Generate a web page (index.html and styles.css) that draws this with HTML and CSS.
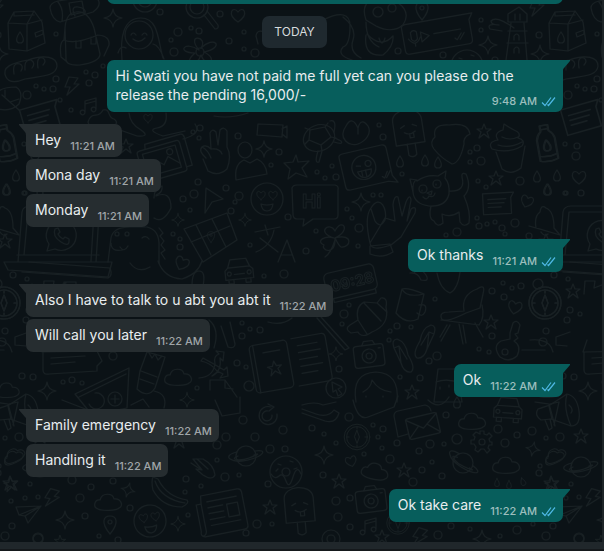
FILE: index.html
```html
<!DOCTYPE html>
<html lang="en">
<head>
<meta charset="utf-8">
<meta name="viewport" content="width=device-width, initial-scale=1">
<title>Chat</title>
<link rel="stylesheet" href="styles.css">
</head>
<body>
<svg class="sprite" aria-hidden="true">
  <defs>
    <g id="ticks"><path d="M1 6.5 4 9.5 10 1.5M6.5 8.5 7.5 9.5 14 1.5"/></g>
    <path id="spark" d="M0-9Q1-1 9 0Q1 1 0 9Q-1 1-9 0Q-1-1 0-9Z"/>
    <path id="star" d="M0-7 2-2 7-2 3 1 5 7 0 3-5 7-3 1-7-2-2-2Z"/>
    <path id="heart" d="M0 7C-12-1-5-10 0-3C5-10 12-1 0 7Z"/>
    <path id="drop" d="M0-6C5 1 4 5 0 5S-5 1 0-6Z"/>
    <path id="cloud" d="M-10 7C-16 5-13-3-8-2C-6-10 5-9 6-3C13-4 16 4 11 6C8 9-6 9-10 7Z"/>
    <path id="bolt" d="M-3-9 6-8 2-2 7-2-5 9-2 1-7 1Z"/>
    <path id="note" d="M-5 5V-6L6-9V2M-5-3 6-6M-5 5C-6 1-12 4-9 7C-7 9-5 7-5 5M6 2C5-2-1 1 2 4C4 6 6 4 6 2"/>
    <path id="pin" d="M0 9C-10-3-6-9 0-9S10-3 0 9ZM-2-3a2 2 0 1 0 4 0a2 2 0 1 0-4 0"/>
    <g id="compass"><circle r="13"/><circle r="16"/><path d="M0-8 3 0 0 8-3 0ZM0-12v2M0 10v2M-12 0h2M10 0h2"/></g>
    <g id="saturn"><circle r="10"/><path d="M-9-4C-26 0-14 8 2 4S22-7 9-5M-8 0C-18 4-5 5 3 2S15-3 8-1"/></g>
    <g id="camera"><rect x="-15" y="-10" width="30" height="22" rx="3"/><circle cy="1" r="7"/><circle cy="1" r="3"/><path d="M-6-10-4-14H5L7-10M10-6h2"/></g>
    <g id="love"><circle r="16"/><use href="#heart" transform="translate(-6-4) scale(.65)"/><use href="#heart" transform="translate(6-4) scale(.65)"/><path d="M-6 5Q0 7 6 5Q5 12 0 12T-6 5Z"/></g>
    <g id="card"><path d="M-15-10H16L13-5V11H-15ZM-10-4H8M-10 0H6M-10 4H3"/></g>
    <g id="bottle"><path d="M-4-18H4V-12Q8-9 9-4V17Q0 20-9 17V-4Q-8-9-4-12ZM-4-14H4M-9 12Q0 15 9 12"/><use href="#drop" y="3"/></g>
    <g id="popsicle"><path d="M-15 14V-10C-15-24 13-24 14-10V14ZM-4 14V25Q0 29 4 25V14M-8-3 -4-5M4-5 8-3M-5 2Q0 6 6 2M0 4V8H4V3"/></g>
    <g id="car"><path d="M-14 8V-1L-11-4-8-12H8L11-4 14-1V8ZM-11-4H11M-11 8V12H-6V8M6 8V12H11V8M-5 3H5"/><circle cx="-10" cy="2" r="2"/><circle cx="10" cy="2" r="2"/></g>
    <g id="mail"><rect x="-15" y="-10" width="30" height="20" rx="2"/><path d="M-15-9 0 2 15-9M-15 9-4-1M15 9 4-1"/></g>
    <g id="magnifier"><circle r="11"/><circle r="7"/><path d="M7 8 18 22Q22 22 21 18L10 4"/></g>
    <g id="donut"><circle r="16"/><circle r="4"/><path d="M-15 2Q-11 8-7 4T0 9T7 5T15 2M-8-8l3 1M4-11l3 1M8-3l3-1M-10-1l2-2"/></g>
    <g id="logo"><path d="M-14 15-12 8A15 15 0 1 1-6 13Z"/><path d="M-6-7Q-9 0 0 6T8 3L4 1 2 3Q-2 1-3-2L-1-4-3-8Z"/></g>

    <g id="tile">
      <!-- carton, film roll, backpack, yeti -->
      <path d="M8 23 14 12 34 11 42 22 45 43 27 51 9 49ZM8 23 27 24 42 20M27 24V51M14 12V16L34 15M34 11 27 24M35 33 43 30V34L36 37Z"/>
      <use href="#drop" x="20" y="38"/>
      <path d="M50 8Q50 3 58 1L89-4Q98-3 99 2T93 12L60 22Q52 20 50 8ZM58 2Q64 9 62 21M69 3 82 1 84 12 71 15Z"/>
      <path d="M65 28Q66 13 76 12Q88 10 94 28L100 54Q100 62 80 65Q65 66 66 58ZM65 28 64 40Q74 45 98 35M75 16Q70 6 78 7T85 13M64 40Q59 42 61 57L66 61M98 35Q110 36 109 45L104 56M76 41v7h5v-7M91 37v7h5v-7"/>
      <use href="#spark" x="113" y="18"/>
      <path d="M122 60C120 38 123 18 141 18S158 42 163 58M126 48Q120 45 118 53M153 44Q159 45 164 59M131 35Q133 31 136 35M142 35Q145 31 147 35M133 39Q139 44 145 38"/>
      <circle cx="139" cy="35" r="14"/>
      <circle cx="145" cy="0" r="12"/><circle cx="145" cy="0" r="7"/>
      <use href="#magnifier" x="197" y="7"/>
      <use href="#heart" x="238" y="15"/>
      <path d="M199 50C185 33 209 36 201 48C214 35 226 47 204 52C220 60 206 69 201 55C196 70 181 65 195 53C176 53 184 40 199 50Z"/>
      <circle cx="200" cy="52" r="4"/>
      <path d="M6 77C1 67 12 63 28 60C45 54 57 57 57 66C56 77 39 76 25 79C13 84 8 81 6 77ZM14 74Q12 62 20 64Q24 66 21 71M25 70Q24 59 31 60Q36 63 32 68M38 68Q36 56 43 58Q47 61 43 65"/>
      <path d="M-8 105Q-8 87 16 87Q24 92 19 104Q10 113-5 108ZM2 95 19 110M5 97V90M10 102 19 99"/>
      <use href="#bolt" x="72" y="86"/>
      <use href="#note" x="90" y="107"/>
      <use href="#card" transform="translate(41 117) rotate(-16) scale(1.25)"/>
      <path d="M88 122C92 110 98 120 103 110C111 108 107 118 114 119C124 126 101 133 91 130Z"/>
      <use href="#heart" transform="translate(148 118) scale(.65)"/>
      <path d="M129 113Q130 124 141 130Q151 137 137 136L120 130M166 113Q168 126 157 128T163 136L185 131M183 139Q202 134 195 124M214 116Q230 119 248 113"/>
      <path d="M267 33Q257 28 256 36L258 44M276 66Q284 71 298 61M286 67Q290 56 300 66"/>

      <!-- octopus, voice message, lighthouse -->
      <path d="M366 20C360 3 371-4 387-1S411 13 403 25Q392 34 376 26ZM366 22Q366 41 379 47M367 34Q381 49 393 36Q394 46 383 55Q363 57 366 35M379 38q3 10 6 0M323 20Q350 7 350 26T343 47Q336 55 352 60M343 17Q357 28 353 40T361 58"/>
      <circle cx="378" cy="12" r="5"/><circle cx="392" cy="8" r="4"/>
      <use href="#pin" x="422" y="11"/>
      <g transform="translate(438 34) rotate(-10)"><path d="M-35-12Q-35-15-31-15H37L33-9V11Q33 15 29 15H-31Q-35 15-35 11ZM-17-5-9 0-17 5ZM-4-1H23M-27-6v7q3 4 6 0v-7q-3-3-6 0M-30 0q6 10 12 0M-24 5v3M16 7l2 2 5-6M21 9l5-6"/></g>
      <path d="M514 28Q496 15 491 21Q491 25 499 25Q486 23 490 29L502 31"/>
      <path d="M511 23 506 60M524 23 527 60M508 22V14L519 7 527 14V22ZM508 31H527M507 43H528M515 14V20M520 14V20M514 40V36q3-4 5 0v4M514 53V49q3-4 5 0v4"/>
      <use href="#spark" x="488" y="45"/><use href="#spark" x="540" y="54"/>
      <use href="#donut" x="467" y="66"/><use href="#bolt" x="537" y="7"/>

      <!-- bottle, photos, hand, person -->
      <use href="#bottle" transform="translate(6 143) rotate(-10)"/>
      <use href="#drop" x="16" y="176"/><use href="#drop" x="7" y="190"/><use href="#drop" x="-4" y="177"/>
      <use href="#star" x="126" y="146"/>
      <g transform="translate(163 161) rotate(-16)"><rect x="-23" y="-16" width="44" height="32" rx="3"/><rect x="-18" y="-12" width="34" height="23"/><path d="M-18 9-7-3 0 4 6-3 16 7M-14-16-13-21H24Q27-21 27-17V12H21"/><circle cx="9" cy="-7" r="3"/></g>
      <path d="M206 158Q198 151 202 147Q206 144 211 149L210 133Q212 128 216 132L218 145 220 130Q224 126 227 131L227 147Q232 156 227 169Q218 177 208 171L203 159M202 147Q208 150 211 158M211 149Q220 148 222 154"/>
      <path d="M238 150a7 8 0 1 1 14 0a7 8 0 1 1-14 0M236 180Q234 164 244 160L250 163 257 159Q266 163 267 174Z"/>
      <use href="#spark" transform="translate(264 149) scale(.9)"/>
      <path d="M296 155 298 162 309 161 302 168 307 177 296 173 288 179 290 169 284 163 293 162Z"/>
      <use href="#love" x="267" y="199"/>
      <path d="M206 188 223 199 212 202 205 213Z"/>
      <path d="M156 196Q171 190 171 208Q163 224 154 218M154 198Q154 188 162 186Q163 193 156 195"/>
      <use href="#spark" transform="translate(178 220) scale(.7)"/><use href="#spark" transform="translate(245 220) scale(.7)"/>
      <path d="M184 229 227 213 237 240 203 262ZM196 225 211 255M212 219 226 247M191 242 230 226"/><use href="#pin" transform="translate(211 237) scale(.6)"/>
      <path d="M255 232 280 227M265 225 268 235M256 252Q271 246 274 230M260 238 278 252M278 262 287 240 295 262M281 255H292"/>
      <path d="M-5 228Q-7 216-1 212Q0 204 5 208Q13 211 13 228L19 235-12 226ZM0 232Q3 237 7 234"/>
      <use href="#star" x="5" y="241"/>
      <path d="M18 262 22 212Q23 206 30 206H92Q100 207 99 214L96 262M24 255 28 212H94L91 261M17 255H99M4 262H112L108 277 8 270Z"/>
      <use href="#logo" x="61" y="236"/>
      <path d="M108 262 111 238Q113 227 130 227H147Q160 230 159 247V263M111 243Q111 252 122 250M120 247Q124 253 128 246M159 228l4 5-3 3 4 5-3 4 4 5-4 3 4 6M142 238Q146 235 149 239"/>
      <circle cx="117" cy="234" r="2"/><circle cx="127" cy="234" r="2"/>
      <path d="M258 124 283 125 282 137 257 135ZM282 129 287 126V138L282 134"/>

      <!-- turtle, ice lolly, cupcake, cat -->
      <ellipse cx="319" cy="138" rx="16" ry="13" transform="rotate(-22 319 138)"/>
      <path d="M310 130 325 127 331 137 321 145 309 140ZM310 130 305 128M325 127 328 123M331 137 336 138M321 145 322 151M309 140 305 144M334 132Q337 119 330 121M334 142Q344 145 341 141L335 138M318 151Q314 164 319 162L322 151"/>
      <path d="M346 126C337 139 350 147 358 144S372 133 368 126Q361 117 358 128Q352 115 346 126M358 128V134"/>
      <use href="#popsicle" transform="translate(409 130) rotate(-9)"/>
      <path d="M434 149Q429 142 435 137Q432 124 449 125Q468 122 470 134Q463 137 464 144Q460 163 452 164Q441 158 434 149Z"/>
      <use href="#star" x="484" y="131"/>
      <path d="M492 149Q487 142 498 140Q493 133 503 130L504 124Q510 128 514 130Q522 133 518 138Q526 140 522 146Q508 154 492 149ZM496 152 502 169Q511 176 521 168L525 146M502 137Q510 141 518 137M498 145Q509 149 522 142"/>
      <use href="#bottle" transform="translate(546 143) rotate(-10)"/>
      <g transform="translate(366 168) rotate(-13)"><path d="M-24-16Q-24-19-20-19H20Q24-19 24-15V13L28 21 19 18H-20Q-24 18-24 14Z"/><circle cx="-2" cy="-1" r="12"/><path d="M-9-4-5-3M-9 2H5Q4 9-2 9T-9 2M-5 2v5M-1 2v6M14 12l2 2 4-6M18 14l5-6"/><circle cx="3" cy="-4" r="3"/></g>
      <use href="#drop" x="400" y="162"/><use href="#drop" x="425" y="161"/><use href="#drop" x="438" y="163"/>
      <path d="M413 192Q412 181 417 180L410 179 413 192Q414 204 429 206Q446 207 449 194Q450 184 445 178L446 171 438 176Q427 174 417 181M449 191Q466 192 462 177Q461 172 466 174Q472 188 464 196Q471 212 469 223Q464 228 460 222L459 212Q451 218 442 214L443 223Q437 228 434 221Q428 219 431 206M422 190v1M436 184v1M427 193l5-2-1 4ZM423 197q4 4 6-1q5 2 6-3"/>
      <circle cx="423" cy="189" r="4"/><circle cx="437" cy="184" r="4"/>
      <use href="#star" x="496" y="178"/><use href="#heart" x="579" y="177"/>
      <use href="#card" transform="translate(498 203) rotate(-3)"/>
      <use href="#heart" transform="translate(527 201) rotate(20) scale(.9)"/>
      <use href="#drop" x="547" y="190"/>
      <path d="M292 188Q293 185 297 185H335Q339 186 338 190V215Q338 219 334 219H313L303 226 304 219H297Q293 219 293 214Z"/>
      <text class="doodle-text" x="302" y="208">Hi</text>
      <use href="#spark" x="361" y="202"/>
      <path d="M334 238C315 232 330 221 335 231C342 217 352 230 335 238C354 233 351 248 341 247Q339 246 335 238C336 257 320 250 324 245C315 241 325 235 334 238M335 240Q331 253 325 257"/>
      <path d="M370 243Q364 217 371 208C380 193 388 210 385 220Q380 229 375 221L371 209M385 218 395 221 393 205Q394 195 398 197L402 216 406 202Q410 193 411 200L407 221 411 209Q417 205 415 213L401 237 391 245Q371 252 370 243ZM370 246 390 244 393 252Q382 259 370 254Z"/>

      <!-- compass, car, clock, mug, chair, key -->
      <use href="#compass" x="4" y="303"/>
      <path d="M43 294 44 281H54L53 288 66 283M64 292V282H76V291M22 272 108 278Q113 276 110 268L29 262"/>
      <path d="M158 261Q164 278 182 279Q198 274 202 261M130 263Q138 274 150 267M192 286Q192 271 199 271T203 286"/>
      <use href="#heart" transform="translate(182 263) rotate(25)"/>
      <use href="#car" transform="translate(239 271) rotate(-6)"/>
      <g transform="translate(352 281) rotate(-13)"><rect x="-27" y="-13" width="51" height="26" rx="5"/><path d="M-22 13v4h43v-4"/><text class="doodle-text clock" x="-22" y="6">09:28</text></g>
      <path d="M351 333Q344 329 350 325L358 320Q355 307 364 302L377 303 381 298Q388 297 386 307Q390 325 372 332Q362 339 358 332ZM358 320 367 334M364 303 381 321M377 303 387 312"/>
      <path d="M402 289 396 313Q406 325 418 319L424 294Q407 287 402 289ZM402 289Q406 298 424 294M419 305Q428 303 425 312Q422 318 417 313"/>
      <path d="M410 273Q418 272 421 280Q430 282 426 275Q419 265 414 273ZM437 273Q440 289 450 293Q458 289 460 272"/>
      <path d="M441 317Q440 312 449 312L464 311Q461 295 477 289Q486 283 483 294L480 308 466 313Q442 325 441 317ZM441 320 479 325Q485 318 482 305M450 325 441 341M463 325 466 343M475 323 483 337M447 325 440 337M459 324 463 344"/>
      <use href="#heart" transform="translate(515 307) rotate(12)"/><use href="#compass" x="545" y="303"/><circle cx="538" cy="284" r="5"/>
      <use href="#star" x="573" y="291"/><use href="#star" x="491" y="322"/>
      <path d="M510 333 513 323Q517 319 520 325L518 333 515 334 518 338 514 341Q522 346 517 356Q509 363 500 357Q492 346 501 341L510 339Z"/><circle cx="505" cy="352" r="3"/>
      <path d="M321 317 349 348 345 350 317 318M221 326 228 347Q235 349 235 344L230 322M209 320Q220 329 214 348M29 332 15 337 15 345 26 346M268 322Q282 326 292 318"/>
      <path d="M43 352 97 351 102 361 97 366V371L49 374Q43 375 43 370ZM51 358 85 356M51 364 75 362M42 352 46 340"/>
      <g transform="translate(280 363) rotate(-10)"><rect x="-28" y="-22" width="38" height="48" rx="4"/><path d="M-24-22V26M-15-13H2M15-22H45Q49-22 49-18V22Q49 26 45 26H15M20-14H40M20-7H42M20 0H38M20 7H42M20 14H36"/><use href="#star" x="-6" y="4"/></g>
      <path d="M147 352 165 357 155 388Q148 399 137 389L140 371ZM149 353 152 358 155 354 158 360 162 356M141 371 157 377M140 379 154 384"/>
      <use href="#cloud" x="178" y="377"/>
      <path d="M199 378Q213 377 215 364Q213 356 219 354L216 351 224 352 223 361 220 358Q222 371 212 376M201 361Q211 363 217 371L223 374 220 378 228 376 227 367 224 370Q214 364 203 358Z"/>
      <use href="#camera" transform="translate(369 355) rotate(-7)"/><use href="#spark" transform="translate(336 354) scale(.75)"/>
      <path d="M394 348Q391 340 397 339Q406 342 408 355Q416 368 411 372Q404 373 401 363ZM394 348 399 346 407 359M399 346 401 363"/>
      <path d="M434 334Q437 326 431 325Q422 328 420 341Q412 354 417 358Q424 359 427 349ZM434 334 429 332 421 345M429 332 427 349"/>
      <circle cx="336" cy="388" r="10"/><path d="M332 382 342 387 338 389 342 394 338 396 336 390 333 392Z"/>
      <path d="M356 402Q351 373 376 372Q400 373 397 402M363 392Q371 388 372 380Q379 391 391 392M366 396v1M383 396v1"/>
      <use href="#star" x="412" y="392"/><use href="#cloud" transform="translate(7 390) scale(.9)"/><use href="#spark" x="47" y="391"/>
      <path d="M75 394 129 368 127 408 92 415ZM79 397 126 374M95 393a8 8 0 1 1-6 11"/><circle cx="115" cy="399" r="7"/><path d="M111 399h8M115 395v8"/>
      <path d="M210 390V380L225 380 237 397M225 380V388L233 389M438 369 434 402H462L457 369ZM436 382Q447 378 460 383M440 387v2M449 385v2M154 391Q168 394 164 408"/>
      <use href="#spark" transform="translate(187 400) scale(.8)"/>
      <path d="M522 350H545M530 340Q550 338 553 352"/>

      <!-- mail, planets, sweets, news -->
      <path d="M-6 402 8 404 14 426M9 404 18 402 13 425M62 400 88 410M131 405 143 399 149 407M215 400 222 416 240 413 240 397"/>
      <path d="M271 407A9 9 0 1 0 277 414M268 404l6 3-5 4M268 411A5 5 0 1 0 272 415"/>
      <use href="#saturn" x="246" y="456"/><use href="#donut" x="286" y="472"/>
      <path d="M193 459 203 459Q214 465 215 475Q212 481 203 475L196 469 202 470ZM191 463 200 469M197 459 208 469"/>
      <use href="#star" x="179" y="441"/><use href="#star" transform="translate(11 484) rotate(-8)"/><use href="#cloud" transform="translate(14 455) rotate(-25) scale(.8)"/>
      <use href="#bolt" transform="translate(52 498) rotate(10)"/>
      <path d="M16 507 41 506 28 523 25 516 19 515ZM25 516 41 506M19 515 41 506"/>
      <use href="#spark" x="65" y="520"/><use href="#cloud" x="108" y="502"/><use href="#spark" transform="translate(128 490) rotate(15) scale(.8)"/><use href="#pin" x="110" y="525"/>
      <path d="M153 477Q151 481 153 490Q162 507 182 507Q190 503 187 500Q167 497 158 479ZM155 481Q161 499 185 503"/>
      <use href="#love" transform="translate(150 521) rotate(-8)"/><use href="#spark" transform="translate(178 524) scale(.8)"/>
      <g transform="translate(223 512) rotate(-11)"><path d="M-19-20H18Q22-20 22-16V17Q22 21 18 21H-22Q-27 20-25 15V-12H-20ZM-20-12V16Q-21 20-24 20M-14-13H16M-14-7H1M-14-1H1M-14 5H1M-14 11H16"/><rect x="5" y="-7" width="11" height="13"/></g>
      <use href="#star" x="270" y="507"/><use href="#popsicle" transform="translate(300 508) rotate(-5)"/>
      <path d="M302 405Q315 401 323 405L336 402M302 409 316 414Q328 418 334 410L339 413Q336 424 325 421L302 413M353 400Q358 421 368 417L394 407 398 396M428 400Q440 411 449 397"/>
      <use href="#drop" x="457" y="403"/>
      <use href="#compass" transform="translate(357 437) scale(.8)"/>
      <use href="#mail" transform="translate(423 426) rotate(-13) scale(1.05)"/><path d="M408 434 398 437 394 416Q394 412 398 411L425 405Q430 406 431 411"/>
      <use href="#cloud" x="472" y="421"/><use href="#car" transform="translate(508 410) rotate(4)"/>
      <circle cx="482" cy="442" r="3"/><path d="M480 434V431H484V434L487 435 489 433 492 436 489 439 490 442H492V445H489L488 448 490 450 487 453 484 449H481L478 452 475 450 476 447 474 444H471V440H474L475 437 473 435 476 432Z"/>
      <path d="M538 409 550 405 567 394Q577 396 579 411T571 426L551 419 541 420Q534 415 538 409ZM549 406 552 419M545 420 549 430 552 428 550 419M567 394Q563 408 571 426M569 405Q574 409 571 413"/>
      <use href="#star" x="581" y="436"/><use href="#spark" transform="translate(533 449) rotate(12) scale(.8)"/><use href="#cloud" transform="translate(554 457) rotate(-25) scale(.75)"/>
      <use href="#saturn" transform="translate(463 463) rotate(45)"/><use href="#saturn" x="581" y="467"/>
      <use href="#cloud" x="506" y="465"/><use href="#spark" x="324" y="455"/><use href="#heart" transform="translate(351 461) rotate(-15) scale(.8)"/><use href="#cloud" transform="translate(375 471) rotate(12)"/>
      <use href="#star" x="404" y="470"/><use href="#star" x="339" y="481"/><use href="#star" x="551" y="483"/>
      <use href="#drop" transform="translate(497 483) scale(.7)"/><use href="#drop" transform="translate(509 485) scale(.7)"/><use href="#drop" transform="translate(523 482) rotate(-20) scale(.7)"/>
      <use href="#camera" transform="translate(371 500) rotate(-7)"/><use href="#note" x="370" y="527"/><use href="#star" x="382" y="537"/><use href="#bolt" transform="translate(420 537) rotate(12)"/><use href="#compass" transform="translate(398 523) scale(.7)"/>
      <circle cx="331" cy="539" r="9"/><circle cx="331" cy="539" r="4"/><use href="#spark" x="482" y="539"/>
      <use href="#star" transform="translate(60 541) scale(.8)"/>

      <!-- bubbles between the drawings -->
      <g id="dots">
        <circle cx="56" cy="34" r="2"/><circle cx="160" cy="12" r="3"/><circle cx="178" cy="32" r="4"/><circle cx="191" cy="28" r="2"/><circle cx="199" cy="31" r="3"/><circle cx="171" cy="40" r="2"/><circle cx="174" cy="52" r="4"/><circle cx="220" cy="14" r="3"/><circle cx="229" cy="41" r="3"/><circle cx="244" cy="32" r="2"/><circle cx="244" cy="49" r="2"/><circle cx="255" cy="53" r="4"/>
        <circle cx="56" cy="79" r="3"/><circle cx="53" cy="89" r="3"/><circle cx="44" cy="89" r="2"/><circle cx="36" cy="86" r="2"/><circle cx="27" cy="95" r="4"/><circle cx="60" cy="100" r="2"/><circle cx="86" cy="72" r="2"/><circle cx="95" cy="75" r="3"/><circle cx="103" cy="66" r="2"/><circle cx="89" cy="83" r="3"/><circle cx="71" cy="110" r="2"/>
        <circle cx="398" cy="51" r="3"/><circle cx="481" cy="20" r="2"/><circle cx="481" cy="30" r="2"/><circle cx="443" cy="55" r="3"/><circle cx="495" cy="60" r="3"/><circle cx="539" cy="35" r="3"/>
        <circle cx="193" cy="132" r="2"/><circle cx="199" cy="138" r="2"/><circle cx="200" cy="128" r="3"/><circle cx="238" cy="136" r="3"/><circle cx="279" cy="152" r="3"/><circle cx="271" cy="165" r="2"/><circle cx="198" cy="182" r="3"/><circle cx="183" cy="199" r="3"/><circle cx="194" cy="194" r="4"/><circle cx="190" cy="210" r="2"/><circle cx="226" cy="188" r="3"/><circle cx="239" cy="196" r="4"/><circle cx="235" cy="202" r="2"/><circle cx="231" cy="211" r="3"/><circle cx="288" cy="217" r="3"/><circle cx="173" cy="234" r="2"/><circle cx="180" cy="239" r="2"/><circle cx="180" cy="247" r="3"/><circle cx="250" cy="245" r="2"/><circle cx="25" cy="193" r="2"/>
        <circle cx="379" cy="125" r="2"/><circle cx="383" cy="137" r="3"/><circle cx="317" cy="172" r="2"/><circle cx="325" cy="178" r="2"/><circle cx="332" cy="166" r="2"/><circle cx="336" cy="177" r="3"/><circle cx="402" cy="174" r="2"/><circle cx="373" cy="195" r="2"/><circle cx="381" cy="195" r="2"/><circle cx="347" cy="209" r="2"/><circle cx="352" cy="218" r="2"/><circle cx="359" cy="228" r="4"/><circle cx="316" cy="231" r="2"/><circle cx="306" cy="251" r="3"/><circle cx="358" cy="246" r="2"/>
        <circle cx="477" cy="148" r="3"/><circle cx="470" cy="152" r="2"/><circle cx="470" cy="162" r="2"/><circle cx="481" cy="161" r="4"/><circle cx="478" cy="181" r="2"/><circle cx="486" cy="187" r="2"/><circle cx="520" cy="181" r="4"/><circle cx="477" cy="218" r="2"/><circle cx="479" cy="226" r="3"/><circle cx="487" cy="224" r="2"/><circle cx="495" cy="222" r="2"/><circle cx="502" cy="228" r="3"/><circle cx="515" cy="223" r="4"/><circle cx="505" cy="234" r="2"/><circle cx="529" cy="236" r="3"/><circle cx="446" cy="235" r="2"/><circle cx="457" cy="232" r="4"/><circle cx="565" cy="144" r="2"/><circle cx="577" cy="146" r="3"/><circle cx="576" cy="156" r="4"/><circle cx="565" cy="193" r="2"/><circle cx="581" cy="193" r="3"/>
        <circle cx="13" cy="275" r="3"/><circle cx="27" cy="279" r="2"/><circle cx="5" cy="331" r="3"/><circle cx="113" cy="356" r="4"/><circle cx="22" cy="376" r="3"/><circle cx="33" cy="377" r="3"/><circle cx="63" cy="382" r="2"/><circle cx="72" cy="380" r="3"/><circle cx="82" cy="383" r="2"/><circle cx="242" cy="323" r="2"/><circle cx="250" cy="329" r="2"/><circle cx="260" cy="330" r="3"/><circle cx="242" cy="336" r="3"/><circle cx="237" cy="363" r="3"/><circle cx="246" cy="367" r="2"/><circle cx="249" cy="386" r="5"/><circle cx="197" cy="388" r="2"/><circle cx="264" cy="276" r="2"/><circle cx="284" cy="274" r="4"/>
        <circle cx="344" cy="314" r="4"/><circle cx="349" cy="305" r="2"/><circle cx="342" cy="324" r="2"/><circle cx="390" cy="331" r="2"/><circle cx="397" cy="326" r="3"/><circle cx="411" cy="327" r="2"/><circle cx="389" cy="340" r="2"/><circle cx="435" cy="299" r="2"/><circle cx="492" cy="291" r="3"/><circle cx="503" cy="283" r="2"/><circle cx="512" cy="288" r="2"/><circle cx="504" cy="297" r="3"/><circle cx="521" cy="286" r="3"/><circle cx="492" cy="336" r="3"/><circle cx="543" cy="342" r="4"/><circle cx="479" cy="349" r="2"/><circle cx="489" cy="352" r="2"/><circle cx="437" cy="356" r="4"/><circle cx="429" cy="361" r="3"/><circle cx="420" cy="378" r="3"/><circle cx="339" cy="369" r="3"/><circle cx="400" cy="377" r="2"/><circle cx="570" cy="310" r="3"/><circle cx="580" cy="314" r="2"/><circle cx="567" cy="320" r="3"/>
        <circle cx="226" cy="437" r="4"/><circle cx="217" cy="445" r="4"/><circle cx="243" cy="420" r="4"/><circle cx="255" cy="437" r="4"/><circle cx="283" cy="430" r="4"/><circle cx="270" cy="449" r="4"/><circle cx="285" cy="449" r="3"/><circle cx="217" cy="460" r="2"/><circle cx="225" cy="477" r="4"/><circle cx="239" cy="475" r="2"/><circle cx="268" cy="484" r="3"/><circle cx="186" cy="479" r="3"/><circle cx="201" cy="486" r="2"/><circle cx="185" cy="492" r="2"/><circle cx="188" cy="515" r="2"/><circle cx="72" cy="480" r="4"/><circle cx="91" cy="487" r="3"/><circle cx="113" cy="481" r="3"/><circle cx="80" cy="498" r="4"/><circle cx="11" cy="501" r="2"/><circle cx="25" cy="498" r="2"/><circle cx="38" cy="497" r="2"/><circle cx="5" cy="536" r="4"/><circle cx="12" cy="526" r="3"/><circle cx="38" cy="539" r="5"/><circle cx="85" cy="516" r="3"/><circle cx="130" cy="508" r="3"/><circle cx="99" cy="536" r="2"/><circle cx="118" cy="540" r="3"/><circle cx="246" cy="533" r="3"/><circle cx="257" cy="524" r="4"/><circle cx="272" cy="524" r="2"/>
        <circle cx="312" cy="428" r="3"/><circle cx="324" cy="434" r="2"/><circle cx="336" cy="443" r="2"/><circle cx="349" cy="417" r="4"/><circle cx="373" cy="425" r="2"/><circle cx="383" cy="429" r="3"/><circle cx="378" cy="437" r="2"/><circle cx="382" cy="448" r="2"/><circle cx="397" cy="443" r="3"/><circle cx="419" cy="451" r="3"/><circle cx="430" cy="444" r="4"/><circle cx="444" cy="444" r="2"/><circle cx="457" cy="439" r="5"/><circle cx="446" cy="415" r="3"/><circle cx="498" cy="429" r="4"/><circle cx="517" cy="435" r="3"/><circle cx="505" cy="443" r="4"/><circle cx="532" cy="431" r="4"/><circle cx="546" cy="438" r="2"/><circle cx="560" cy="437" r="4"/><circle cx="390" cy="459" r="4"/><circle cx="364" cy="454" r="2"/><circle cx="422" cy="470" r="3"/><circle cx="432" cy="462" r="2"/><circle cx="442" cy="476" r="3"/><circle cx="413" cy="482" r="4"/><circle cx="323" cy="475" r="3"/><circle cx="336" cy="501" r="4"/><circle cx="350" cy="498" r="3"/><circle cx="338" cy="517" r="4"/><circle cx="350" cy="527" r="3"/><circle cx="438" cy="535" r="4"/><circle cx="451" cy="526" r="3"/><circle cx="470" cy="529" r="2"/><circle cx="500" cy="536" r="2"/><circle cx="517" cy="530" r="4"/><circle cx="533" cy="524" r="2"/><circle cx="540" cy="466" r="2"/><circle cx="539" cy="473" r="3"/><circle cx="571" cy="484" r="2"/><circle cx="579" cy="538" r="5"/>
      </g>
    </g>
    <pattern id="wallpaper" width="541" height="900" patternUnits="userSpaceOnUse">
      <use href="#tile"/><use href="#tile" x="541"/><use href="#tile" x="-541"/>
    </pattern>
  </defs>
</svg>

<div class="app">
  <main class="chat">
    <svg class="wallpaper" aria-hidden="true"><rect width="100%" height="100%" fill="url(#wallpaper)"/></svg>
    <div class="messages">
      <div class="bubble out earlier"></div>
      <div class="day">TODAY</div>

      <section class="group sent">
        <article class="bubble out tail long"><p>Hi Swati you have not paid me full yet can you please do the release the pending 16,000/-</p><span class="meta"><time>9:48 AM</time><svg class="ticks" viewBox="0 0 15 11" role="img" aria-label="Read"><use href="#ticks"/></svg></span></article>
      </section>
      <section class="group">
        <article class="bubble tail"><p>Hey</p><span class="meta"><time>11:21 AM</time></span></article>
        <article class="bubble"><p>Mona day</p><span class="meta"><time>11:21 AM</time></span></article>
        <article class="bubble"><p>Monday</p><span class="meta"><time>11:21 AM</time></span></article>
      </section>
      <section class="group sent">
        <article class="bubble out tail"><p>Ok thanks</p><span class="meta"><time>11:21 AM</time><svg class="ticks" viewBox="0 0 15 11" role="img" aria-label="Read"><use href="#ticks"/></svg></span></article>
      </section>
      <section class="group">
        <article class="bubble tail"><p>Also I have to talk to u abt you abt it</p><span class="meta"><time>11:22 AM</time></span></article>
        <article class="bubble"><p>Will call you later</p><span class="meta"><time>11:22 AM</time></span></article>
      </section>
      <section class="group sent">
        <article class="bubble out tail"><p>Ok</p><span class="meta"><time>11:22 AM</time><svg class="ticks" viewBox="0 0 15 11" role="img" aria-label="Read"><use href="#ticks"/></svg></span></article>
      </section>
      <section class="group">
        <article class="bubble tail"><p>Family emergency</p><span class="meta"><time>11:22 AM</time></span></article>
        <article class="bubble"><p>Handling it</p><span class="meta"><time>11:22 AM</time></span></article>
      </section>
      <section class="group sent">
        <article class="bubble out tail"><p>Ok take care</p><span class="meta"><time>11:22 AM</time><svg class="ticks" viewBox="0 0 15 11" role="img" aria-label="Read"><use href="#ticks"/></svg></span></article>
      </section>
    </div>
  </main>
  <footer class="composer"></footer>
</div>
</body>
</html>
```

FILE: styles.css
```css
* {
  box-sizing: border-box;
}

body {
  margin: 0;
  background: #0b1216;
  font-family: Inter, "Liberation Sans", sans-serif;
}

.sprite {
  position: absolute;
  width: 0;
  height: 0;
}

.app {
  display: flex;
  flex-direction: column;
  min-height: 100vh;
}

.chat {
  position: relative;
  flex: 1;
  overflow: hidden;
  border-right: 2px solid #1d2427;
}

.wallpaper {
  position: absolute;
  inset: 0;
  width: 100%;
  height: 100%;
}

#tile {
  fill: none;
  stroke: #182023;
  stroke-width: 1.2;
  stroke-linecap: round;
  stroke-linejoin: round;
}

.doodle-text {
  font-size: 19px;
  font-weight: 700;
  stroke-width: 1;
}

.doodle-text.clock {
  font-size: 15px;
}

.messages {
  position: relative;
  display: flex;
  flex-direction: column;
  gap: 12px;
  padding: 0 39px 20px 26px;
}

.group {
  display: flex;
  flex-direction: column;
  align-items: flex-start;
  gap: 2px;
}

.sent {
  align-items: flex-end;
}

.day {
  align-self: center;
  padding: 0 12px;
  border-radius: 7px;
  background: #1f292f;
  color: #d7dbdd;
  font-size: 12px;
  line-height: 32px;
}

.bubble {
  --fill: #262d30;
  position: relative;
  display: flex;
  align-items: flex-end;
  gap: 9px;
  max-width: 85%;
  padding: 0 7px 0 9px;
  border-radius: 7px;
  background: var(--fill);
  color: #e9edef;
  font-size: 14px;
  line-height: 19px;
}

.bubble p {
  margin: 0;
  padding: 6px 0 8px;
}

.out {
  --fill: #075e5c;
}

.earlier {
  align-self: flex-end;
  width: 85%;
  height: 33px;
  margin-top: -29px;
}

/* The time floats at the end of the last line, or drops below it. */
.long {
  display: flow-root;
  padding-top: 6px;
}

.long p {
  display: inline;
  padding: 0;
}

.long .meta {
  float: right;
  margin: 9px 0 0 9px;
}

.tail {
  border-top-left-radius: 0;
}

.tail::before {
  content: "";
  position: absolute;
  top: 0;
  left: -7px;
  width: 8px;
  height: 10px;
  background: var(--fill);
  clip-path: polygon(0 0, 100% 0, 100% 100%, 6px 8px, 0 1px);
}

.out.tail {
  border-radius: 7px 0 7px 7px;
}

.out.tail::before {
  left: auto;
  right: -7px;
  transform: scaleX(-1);
}

.meta {
  display: flex;
  align-items: center;
  gap: 4px;
  padding-bottom: 3px;
  color: #a0a6a9;
  font-size: 11px;
  font-weight: 500;
  line-height: 15px;
  white-space: nowrap;
}

.out .meta {
  color: #9dbfbe;
}

.ticks {
  width: 15px;
  height: 11px;
  fill: none;
  stroke: #4eb8e4;
  stroke-width: 1.2;
}

.composer {
  height: 9px;
  border-bottom: 2px solid #15191c;
  background: #20272b;
}
```
